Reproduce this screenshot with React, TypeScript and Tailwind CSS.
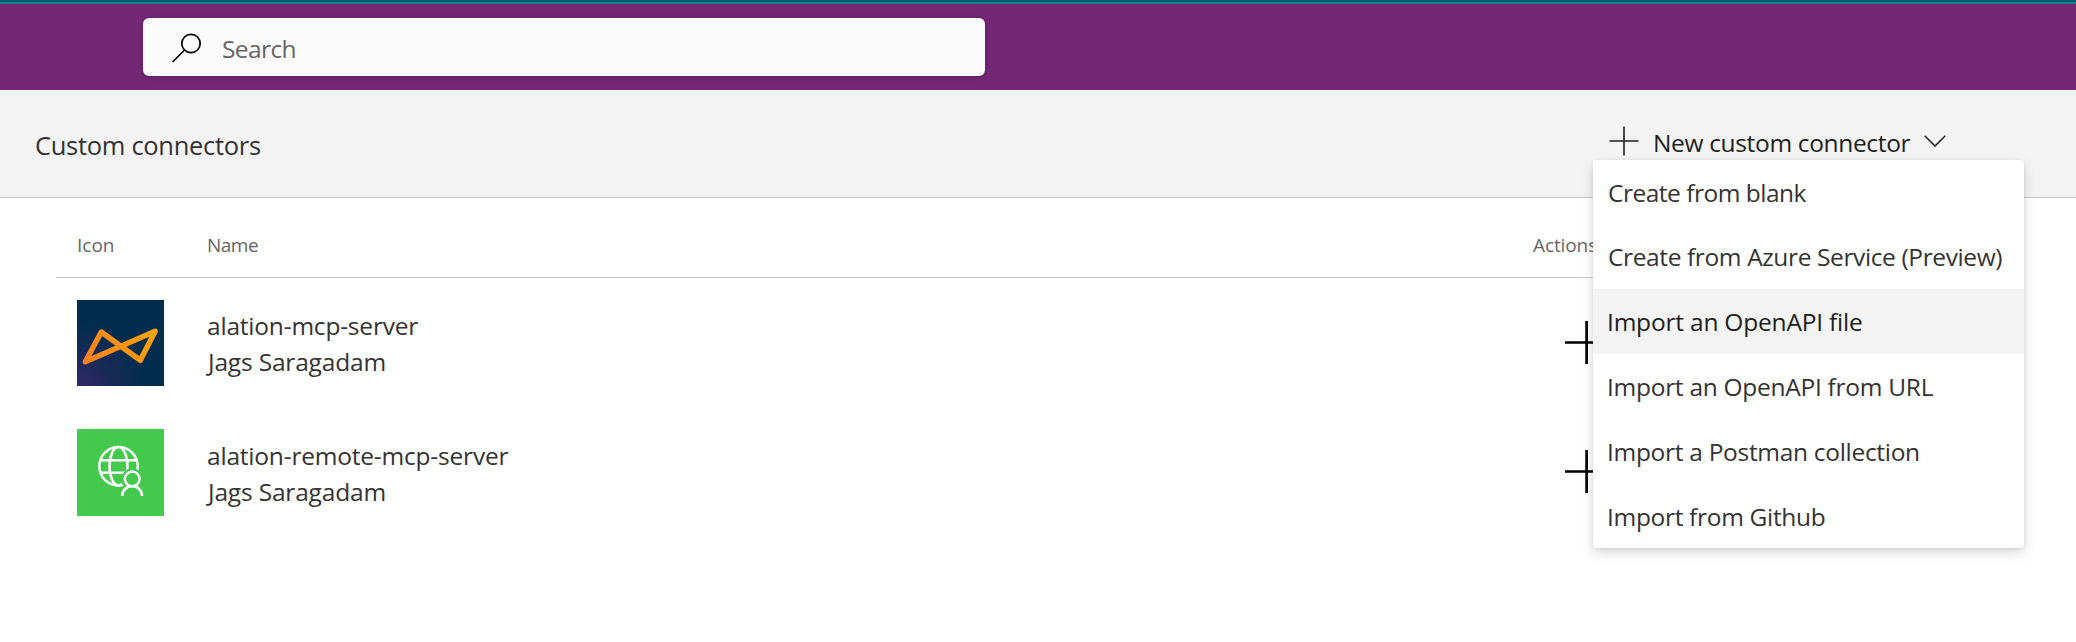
import React from 'react';
import clsx from 'clsx';

const menuItems = [
  { label: 'Create from blank', style: 'h-16 tracking-[-0.5px] pt-px pl-[15px]' },
  { label: 'Create from Azure Service (Preview)', style: 'h-[65px] tracking-[-0.38px] pl-[15px]' },
  { label: 'Import an OpenAPI file', style: 'h-[65px] tracking-[-0.2px] bg-[#f3f3f3] text-[#201f1e] pl-3.5' },
  { label: 'Import an OpenAPI from URL', style: 'h-[65px] tracking-[-0.28px] pl-3.5' },
  { label: 'Import a Postman collection', style: 'h-[65px] tracking-[-0.3px] pl-3.5' },
  { label: 'Import from Github', style: 'h-16 tracking-[-0.32px] pt-px pl-3.5' },
];

function SearchIcon() {
  return (
    <svg className="h-[30px] w-[30px]" viewBox="0 0 30 30" fill="none" stroke="#000" strokeWidth="1.7">
      <circle cx="19" cy="10.5" r="9.2" />
      <path d="M12.5 17 .6 29" />
    </svg>
  );
}

function AlationIcon() {
  return (
    <svg className="h-[86px] w-[87px]" viewBox="0 0 87 86" fill="none">
      <defs>
        <radialGradient id="navy" gradientUnits="userSpaceOnUse" cx="4" cy="86" r="62">
          <stop offset="0" stopColor="#2f2766" />
          <stop offset="0.45" stopColor="#1a2a59" />
          <stop offset="1" stopColor="#032d4f" />
        </radialGradient>
        <linearGradient id="orange" gradientUnits="userSpaceOnUse" x1="8" y1="62" x2="78" y2="30">
          <stop offset="0" stopColor="#f98020" />
          <stop offset="1" stopColor="#ffa300" />
        </linearGradient>
      </defs>
      <path d="M0 0h87v86H0z" fill="url(#navy)" />
      <path
        d="M8.3 61.8 24.3 32 63.3 60.3 78.2 31.2Z"
        stroke="url(#orange)"
        strokeWidth="5.4"
        strokeLinejoin="round"
      />
    </svg>
  );
}

function GlobePersonIcon() {
  return (
    <svg className="h-[87px] w-[87px]" viewBox="0 0 87 87" fill="none" stroke="#fff" strokeWidth="2.5">
      <path d="M0 0h87v87H0z" fill="#43c94c" stroke="none" />
      <circle cx="41.5" cy="37.3" r="19.2" />
      <ellipse cx="41.5" cy="37.3" rx="9" ry="19.2" />
      <path d="M23.3 31.3h36.4M23.3 43.8h36.4" />
      <path
        d="M45 66.8c0-5.3 1.5-8.1 4-9.3a9.4 9.4 0 1 1 12.4-.1c4 1.5 5.3 5 5.3 9.4Z"
        fill="#43c94c"
        stroke="#43c94c"
        strokeWidth="3"
      />
      <circle cx="55.2" cy="50" r="7.4" />
      <path d="M45.2 67a9.9 9.9 0 0 1 19.8 0" />
    </svg>
  );
}

function ActionPlus() {
  return (
    <svg className="h-[43px] w-[43px]" viewBox="0 0 43 43" fill="none" stroke="#000" strokeWidth="2.7">
      <path d="M21.6 0v43M0 21.5h43" />
    </svg>
  );
}

function TopBar() {
  return (
    <header className="h-[90px] border-t-2 border-[#005a70] bg-[#742774]">
      <div className="h-0.5 bg-[#1e7b8b]" />
      <div className="mt-3.5 ml-[143px] flex h-[58px] w-[842px] items-center rounded-md bg-[#fafafa] pt-0.5 pl-[29px] shadow-[0_1px_4px_rgba(0,0,0,0.25)]">
        <SearchIcon />
        <span className="ml-5 pt-[3px] text-[24.5px] tracking-[-0.6px] text-[#666]">Search</span>
      </div>
    </header>
  );
}

function Toolbar() {
  return (
    <div className="flex h-[108px] justify-between border-b border-[#c6c6c6] bg-[#f3f3f3] pl-[35px] pr-[52px]">
      <h1 className="pt-[37px] text-[25.5px] leading-9 tracking-[-0.3px]">Custom connectors</h1>
      <div className="relative w-[431px]">
        <button className="mt-[35px] flex h-9 items-center pl-4 text-[#201f1e]">
          <svg className="mb-1 h-[30px] w-[30px]" viewBox="0 0 30 30" fill="none" stroke="currentColor" strokeWidth="1.6">
            <path d="M15 .5v29M.5 15h29" />
          </svg>
          <span className="ml-3.5 text-[24.5px] leading-9 tracking-[-0.34px]">New custom connector</span>
          <svg className="mb-1 ml-3.5 h-3 w-[22px]" viewBox="0 0 22 12" fill="none" stroke="currentColor" strokeWidth="1.5">
            <path d="m.7.8 10.3 10.3L21.3.8" />
          </svg>
        </button>
        <ul className="absolute top-[70px] left-0 z-10 w-[431px] overflow-hidden rounded-[4px] bg-white shadow-[0_6px_14px_rgba(0,0,0,0.13),0_1px_4px_rgba(0,0,0,0.11)]">
          {menuItems.map((item) => (
            <li key={item.label} className={clsx('flex items-center text-[24.5px] leading-9 whitespace-nowrap', item.style)}>
              {item.label}
            </li>
          ))}
        </ul>
      </div>
    </div>
  );
}

function ConnectorTable() {
  return (
    <main className="mr-[52px] ml-14">
      <div className="flex h-20 items-center border-b border-[#c8c8c8] pl-[21px] pt-[15px] text-[19px] text-[#666]">
        <div className="w-[130px]">Icon</div>
        <div className="flex-1 tracking-[-0.5px]">Name</div>
        <div className="w-[491px] tracking-[-0.1px]">Actions</div>
      </div>
      <div className="flex h-[130px] items-start pt-[22px] pl-[21px]">
        <AlationIcon />
        <div className="ml-[43px] flex-1 pt-2 text-[24.5px] leading-9">
          <div className="tracking-[-0.2px]">alation-mcp-server</div>
          <div className="pl-px tracking-[-0.18px]">Jags Saragadam</div>
        </div>
        <div className="w-[459px] pt-[21px]">
          <ActionPlus />
        </div>
      </div>
      <div className="flex h-[129px] items-start pt-[21px] pl-[21px]">
        <GlobePersonIcon />
        <div className="ml-[43px] flex-1 pt-[9px] text-[24.5px] leading-9">
          <div className="tracking-[-0.2px]">alation-remote-mcp-server</div>
          <div className="pl-px tracking-[-0.18px]">Jags Saragadam</div>
        </div>
        <div className="w-[459px] pt-[21px]">
          <ActionPlus />
        </div>
      </div>
    </main>
  );
}

export default function App() {
  return (
    <div className="h-[642px] w-[2076px] overflow-hidden bg-white font-['Segoe_UI','Open_Sans',sans-serif] text-[#333]">
      <TopBar />
      <Toolbar />
      <ConnectorTable />
    </div>
  );
}
